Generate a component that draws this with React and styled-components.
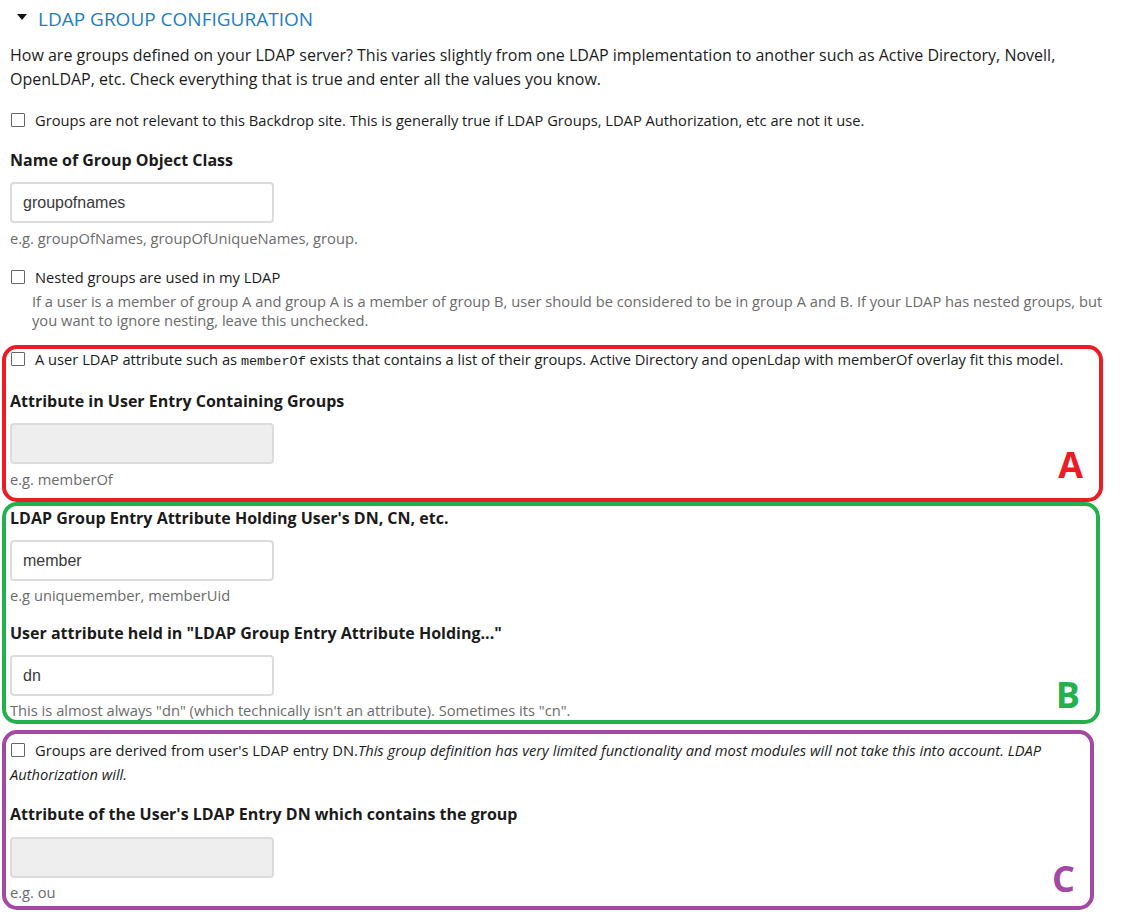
import React from 'react';
import styled, { createGlobalStyle } from 'styled-components';

const GlobalStyle = createGlobalStyle`
  body {
    margin: 0;
    background: #fff;
    font-family: "Open Sans", "Noto Sans", sans-serif;
    color: #1b1b1b;
  }
`;

const Page = styled.div`
  padding: 5px 37px 0 10px;
  width: 1142px;
  box-sizing: border-box;
`;

const Legend = styled.div`
  display: flex;
  align-items: center;
  height: 28px;
  padding-left: 7px;
  gap: 11px;
  font-size: 19px;
  color: #1f7dc1;
  text-transform: uppercase;
`;

const Caret = styled.span`
  width: 0;
  height: 0;
  border-left: 5.5px solid transparent;
  border-right: 5.5px solid transparent;
  border-top: 6px solid #111;
  margin-top: -4px;
`;

const Intro = styled.p`
  margin: 10px 0 0;
  font-size: 16px;
  line-height: 24px;
`;

const CheckRow = styled.label`
  display: block;
  margin-top: ${(p) => p.top || 0}px;
  font-size: 14.7px;
  line-height: ${(p) => p.lh || 20}px;

  code {
    font-family: "Liberation Mono", "DejaVu Sans Mono", monospace;
    font-size: 13.5px;
  }
`;

const Box = styled.input.attrs({ type: 'checkbox' })`
  appearance: none;
  display: inline-block;
  vertical-align: top;
  width: 14px;
  height: 14px;
  margin: ${(p) => p.offset || 3}px 10px 0 1px;
  border: 1px solid #666;
  border-radius: 1px;
  background: #fff;
  box-sizing: border-box;
`;

const Label = styled.div`
  margin-top: ${(p) => p.top || 0}px;
  font-size: 16px;
  line-height: 22px;
  font-weight: 700;
`;

const TextInput = styled.input.attrs({ type: 'text', readOnly: true })`
  display: block;
  margin-top: ${(p) => p.top || 11}px;
  width: 264px;
  height: 41px;
  box-sizing: border-box;
  padding: 0 11px;
  border: 2px solid #dcdcdc;
  border-radius: 4px;
  background: ${(p) => (p.disabled ? '#eeeeee' : '#fff')};
  font-family: "Liberation Sans", Arial, sans-serif;
  font-size: 16px;
  color: #3a3a3a;
  outline: none;
`;

const Help = styled.div`
  margin-top: ${(p) => p.top || 6}px;
  padding-left: ${(p) => p.indent || 0}px;
  font-size: 14.7px;
  line-height: 19px;
  color: #6b6b6b;
`;

const Frame = styled.div`
  position: relative;
  width: ${(p) => p.w}px;
  margin: ${(p) => p.top || 0}px 0 0 -8px;
  padding: ${(p) => p.pt || 0}px 0 ${(p) => p.pb || 0}px 4px;
  border: 4px solid ${(p) => p.color};
  border-radius: 15px;
  box-sizing: border-box;
`;

const Tag = styled.span`
  position: absolute;
  right: ${(p) => p.right}px;
  bottom: ${(p) => p.bottom}px;
  font-size: 36px;
  line-height: 1;
  font-weight: 700;
  color: ${(p) => p.color};
`;

const RED = '#ed1c24';
const GREEN = '#22b14c';
const PURPLE = '#a349a4';

export default function App() {
  return (
    <Page>
      <GlobalStyle />
      <Legend>
        <Caret />
        LDAP Group Configuration
      </Legend>
      <Intro>
        How are groups defined on your LDAP server? This varies slightly from one LDAP
        implementation to another such as Active Directory, Novell, OpenLDAP, etc. Check
        everything that is true and enter all the values you know.
      </Intro>

      <CheckRow top={19}>
        <Box />
        Groups are not relevant to this Backdrop site. This is generally true if LDAP Groups, LDAP Authorization, etc are not it use.
      </CheckRow>

      <Label top={19}>Name of Group Object Class</Label>
      <TextInput defaultValue="groupofnames" />
      <Help>e.g. groupOfNames, groupOfUniqueNames, group.</Help>

      <CheckRow top={19}>
        <Box />
        Nested groups are used in my LDAP
      </CheckRow>
      <Help top={5} indent={22}>
        If a user is a member of group A and group A is a member of group B, user should be considered to be in group A and B. If your LDAP has nested groups, but you want to ignore nesting, leave this unchecked.
      </Help>

      <Frame color={RED} w={1101} top={15} pb={9}>
        <CheckRow>
          <Box />
          A user LDAP attribute such as <code>memberOf</code> exists that contains a list of their groups. Active Directory and openLdap with memberOf overlay fit this model.
        </CheckRow>
        <Label top={18}>Attribute in User Entry Containing Groups</Label>
        <TextInput disabled />
        <Help>e.g. memberOf</Help>
        <Tag color={RED} right={16} bottom={15}>A</Tag>
      </Frame>

      <Frame color={GREEN} w={1098} pt={1}>
        <Label>LDAP Group Entry Attribute Holding User's DN, CN, etc.</Label>
        <TextInput defaultValue="member" />
        <Help top={5}>e.g uniquemember, memberUid</Help>
        <Label top={17}>User attribute held in "LDAP Group Entry Attribute Holding..."</Label>
        <TextInput defaultValue="dn" />
        <Help top={5}>This is almost always "dn" (which technically isn't an attribute). Sometimes its "cn".</Help>
        <Tag color={GREEN} right={16} bottom={7}>B</Tag>
      </Frame>

      <Frame color={PURPLE} w={1092} top={6} pt={4} pb={4}>
        <CheckRow lh={24}>
          <Box offset={5} />
          Groups are derived from user's LDAP entry DN.<em>This group definition has very limited functionality and most modules will not take this into account. LDAP Authorization will.</em>
        </CheckRow>
        <Label top={17}>Attribute of the User's LDAP Entry DN which contains the group</Label>
        <TextInput disabled top={12} />
        <Help top={5}>e.g. ou</Help>
        <Tag color={PURPLE} right={15} bottom={9}>C</Tag>
      </Frame>
    </Page>
  );
}
